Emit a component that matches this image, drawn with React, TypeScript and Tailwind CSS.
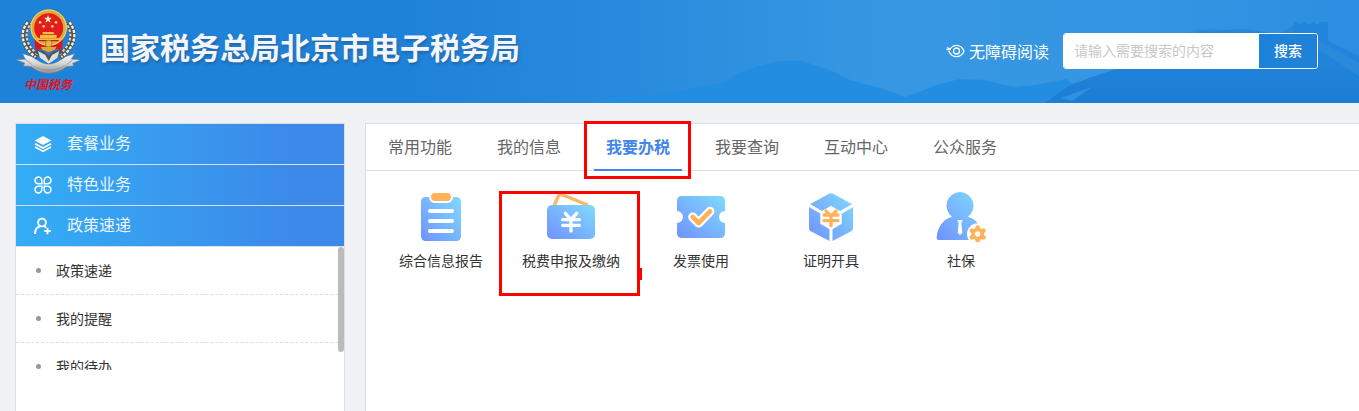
import { useState } from 'react'

const tabs = ['常用功能', '我的信息', '我要办税', '我要查询', '互动中心', '公众服务']
const notices = ['政策速递', '我的提醒', '我的待办']

function Emblem() {
  return (
    <svg width="66" height="66" viewBox="45 28 198 198" aria-hidden="true">
      <defs>
        <linearGradient id="ribbon" x1="0" y1="0" x2="0" y2="1">
          <stop offset="0" stopColor="#ffffff" />
          <stop offset="0.5" stopColor="#d4d4d4" />
          <stop offset="1" stopColor="#8f8f8f" />
        </linearGradient>
      </defs>
      <g fill="none">
        <path d="M88 68C62 98 70 142 112 172" stroke="#55554f" strokeWidth="19" />
        <path d="M203 68C229 98 221 142 179 172" stroke="#55554f" strokeWidth="19" />
        <path d="M83 68C57 98 65 142 107 172" stroke="#f0f0ee" strokeWidth="7" strokeDasharray="9 4" />
        <path d="M208 68C234 98 226 142 184 172" stroke="#f0f0ee" strokeWidth="7" strokeDasharray="9 4" />
        <path d="M93 72C70 100 77 138 115 165" stroke="#dcdcd8" strokeWidth="6" strokeDasharray="8 5" strokeDashoffset="6" />
        <path d="M198 72C221 100 214 138 176 165" stroke="#dcdcd8" strokeWidth="6" strokeDasharray="8 5" strokeDashoffset="6" />
      </g>
      <path d="M103 116h86l-3 36-18-5-22 12-22-12-18 5z" fill="#d8181d" />
      <circle cx="146" cy="84" r="49" fill="#e51c1c" stroke="#dfab35" strokeWidth="11" />
      <circle cx="146" cy="84" r="53" fill="none" stroke="#f6d77b" strokeWidth="3" />
      <path d="M144 45l3 9h9l-7 6 3 9-8-5-8 5 3-9-7-6h9z" fill="#ffedc4" />
      <g fill="#ffd77a">
        <circle cx="120" cy="68" r="4" />
        <circle cx="131" cy="80" r="4" />
        <circle cx="157" cy="80" r="4" />
        <circle cx="168" cy="68" r="4" />
      </g>
      <path d="M128 97h32l4 7h-36zM120 106h50v9h-50zM104 116h82l-8 11h-66z" fill="#f0bd45" />
      <path d="M116 121h60v4h-60z" fill="#c9161d" />
      <circle cx="146" cy="132" r="10" fill="#e5b94c" stroke="#b98217" strokeWidth="3" />
      <path d="M122 142h48l-6 8-18 8-18-8z" fill="#e0a936" />
      <path d="M108 150l22 4 16 14 16-14 22-4 5 10-28 10-15 18-15-18-28-10z" fill="#55534f" />
      <path d="M114 154l22 12 10 18 10-18 22-12-6 20-26 18-26-18z" fill="#dedede" />
      <path
        d="M48 180l28-1-8-17 28 9c20 14 34 22 50 22s32-8 50-22l28-9-10 16 28 3-24 10 3 8-23 2c-18 14-34 20-52 20s-36-7-52-20l-24-2 4-9z"
        fill="url(#ribbon)"
        stroke="#777"
        strokeWidth="1.5"
      />
      <path d="M76 179l20 16M220 179l-20 16M98 198c32 18 64 18 96 0" fill="none" stroke="#888" strokeWidth="2" />
    </svg>
  )
}

function HeaderScene() {
  return (
    <svg className="absolute inset-0 h-full w-full" viewBox="0 0 1359 103" preserveAspectRatio="none" aria-hidden="true">
      <defs>
        <linearGradient id="sky" x1="400" y1="0" x2="1359" y2="0" gradientUnits="userSpaceOnUse">
          <stop offset="0" stopColor="#1f82d9" />
          <stop offset="0.2" stopColor="#2689dc" />
          <stop offset="0.5" stopColor="#3797e2" />
          <stop offset="0.75" stopColor="#3596e3" />
          <stop offset="1" stopColor="#2b8ee0" />
        </linearGradient>
        <linearGradient id="ridge" x1="0" y1="30" x2="0" y2="103" gradientUnits="userSpaceOnUse">
          <stop offset="0" stopColor="#2587dc" />
          <stop offset="1" stopColor="#1b7dd5" />
        </linearGradient>
      </defs>
      <rect width="1359" height="103" fill="url(#sky)" />
      <path d="M590 103l22-6 38-2 30-3 24-6 22-4 10-8 24-8 18-5h24l30 10 18 9 30 8 26 9 30-12 24-6 24 1 30 7 22-2 30-6 30 24z" fill="#238de1" />
      <path d="M1187 34l8-5h22l8 4 20 1 20 12-90 14z" fill="#2b8ddd" />
      <path d="M1045 103l25-18 22-8 45-15 50-26 14-5 42-2 36 5 19-12 29 18 36 18v45z" fill="url(#ridge)" />
      <path d="M1294 42V22h4v2h4v-2h4v2h5v-2h4v2h4v-2h9v20z" fill="#2185db" />
      <path d="M1318 40l41 23v13l-43-28z" fill="#2b89db" />
      <path d="M1060 98l32-11-20 14z" fill="#3190e0" />
    </svg>
  )
}

function EyeIcon() {
  return (
    <svg width="19" height="14" viewBox="0 0 19 14" fill="none" stroke="#fff" strokeWidth="1.300" strokeLinecap="round" aria-hidden="true">
      <path d="M.8 5.200c1.300.7 2.400.5 3.400-.3C5.700 2.700 7.800 1.300 10.500 1.300c3.200 0 6 2.200 7.500 5.700-1.500 3.500-4.300 5.700-7.500 5.700S4.500 10.500 3 7.500" />
      <path d="M1.500 3.800l2.500 1.400" />
      <circle cx="10.500" cy="7" r="3" />
    </svg>
  )
}

function LayersIcon() {
  return (
    <svg width="18" height="18" viewBox="0 0 18 18" aria-hidden="true">
      <path d="M9 1l8.300 4.500L9 10 .7 5.500z" fill="#fff" />
      <path d="M1 8.700l8 4.300 8-4.300M1 12l8 4.300 8-4.300" fill="none" stroke="#fff" strokeWidth="1.600" />
    </svg>
  )
}

function PetalsIcon() {
  return (
    <svg width="18" height="18" viewBox="0 0 18 18" fill="none" stroke="#fff" strokeWidth="1.500" aria-hidden="true">
      <path d="M7.800 7.800H4.500A3.400 3.400 0 1 1 7.800 4.500z" />
      <path d="M10.200 7.800h3.300a3.400 3.400 0 1 0-3.300-3.300z" />
      <path d="M7.800 10.200H4.500a3.400 3.400 0 1 0 3.300 3.300z" />
      <path d="M10.200 10.200h3.300a3.400 3.400 0 1 1-3.300 3.300z" />
    </svg>
  )
}

function UserPlusIcon() {
  return (
    <svg width="18" height="18" viewBox="0 0 18 18" fill="none" stroke="#fff" strokeWidth="1.900" aria-hidden="true">
      <circle cx="8" cy="5.500" r="3.900" />
      <path d="M1 17c0-4 2.200-7.200 5.500-7.800M9.500 9.200c1 .2 1.900.6 2.600 1.300" />
      <path d="M13.500 10.800v6.400M10.300 14h6.400" />
    </svg>
  )
}

function Gradient({ id }: { id: string }) {
  return (
    <linearGradient id={id} x1="1" y1="0" x2="0" y2="1">
      <stop offset="0" stopColor="#80daff" />
      <stop offset="1" stopColor="#7092ff" />
    </linearGradient>
  )
}

function ReportIcon() {
  return (
    <svg width="50" height="50" viewBox="0 0 150 150" aria-hidden="true">
      <Gradient id="report" />
      <rect x="15" y="15" width="120" height="132" rx="14" fill="url(#report)" />
      <rect x="39" y="-4" width="72" height="37" rx="17" fill="#fff" />
      <rect x="45" y="3" width="60" height="24" rx="12" fill="#ffb258" />
      <path d="M42 57h66M42 87h66M42 117h66" stroke="#fff" strokeWidth="12" strokeLinecap="round" />
    </svg>
  )
}

function WalletIcon() {
  return (
    <svg width="50" height="50" viewBox="0 0 150 150" aria-hidden="true">
      <Gradient id="wallet" />
      <path d="M24 42L36 14q5-9 15-5l75 31" fill="none" stroke="#ffb660" strokeWidth="10" />
      <rect x="3" y="39" width="144" height="102" rx="15" fill="url(#wallet)" />
      <path d="M58 64l17 19 17-19M75 83v34M50 83h50M50 100h50" fill="none" stroke="#fff" strokeWidth="10" strokeLinecap="round" />
    </svg>
  )
}

function InvoiceIcon() {
  return (
    <svg width="50" height="50" viewBox="0 0 150 150" aria-hidden="true">
      <Gradient id="invoice" />
      <path
        d="M18 12h114q15 0 15 15v30a18 18 0 0 0 0 36v30q0 15-15 15H18q-15 0-15-15V93a18 18 0 0 0 0-36V27q0-15 15-15z"
        fill="url(#invoice)"
      />
      <path d="M50 75l18 18 34-35" fill="none" stroke="#fff" strokeWidth="27" strokeLinecap="round" strokeLinejoin="round" />
      <path d="M50 75l18 18 34-35" fill="none" stroke="#ffb258" strokeWidth="14" strokeLinejoin="round" strokeLinecap="round" />
    </svg>
  )
}

function CertificateIcon() {
  return (
    <svg width="50" height="50" viewBox="0 0 150 150" aria-hidden="true">
      <Gradient id="certificate" />
      <path
        d="M69 5q6-3 12 0l56 31q4 2 4 7v66q0 5-4 8l-56 29q-6 3-12 0l-56-29q-4-3-4-8V43q0-5 4-7z"
        fill="url(#certificate)"
      />
      <path d="M75 78L6 38M75 78l70-40M75 78v72" stroke="#fff" strokeWidth="9" />
      <path d="M75 41l32 19v35l-32 19-32-19V60z" fill="#fff" />
      <path d="M60 57l9 10M90 57l-9 10M54 69h42M54 86h42M75 69v32" fill="none" stroke="#ffb258" strokeWidth="10" strokeLinecap="round" />
    </svg>
  )
}

function SocialIcon() {
  return (
    <svg width="50" height="50" viewBox="0 0 150 150" aria-hidden="true">
      <Gradient id="social" />
      <path
        d="M72 0a41 41 0 0 1 24 74c24 8 38 26 44 50v10q-2 10-12 10H8q-7 0-6-9c3-30 20-54 46-61A41 41 0 0 1 72 0z"
        fill="url(#social)"
      />
      <path d="M64 84h16l-4 9 3 29-7 7-7-7 3-29z" fill="#fff" />
      <circle cx="125" cy="126" r="32" fill="#fff" />
      <circle cx="125" cy="126" r="19" fill="#ffb258" />
      <path d="M125 107v38M108 116l34 20M108 136l34-20" stroke="#ffb258" strokeWidth="14" strokeLinecap="round" />
      <circle cx="125" cy="126" r="8" fill="#fff" />
    </svg>
  )
}

const menus = [
  { name: '套餐业务', icon: <LayersIcon /> },
  { name: '特色业务', icon: <PetalsIcon /> },
  { name: '政策速递', icon: <UserPlusIcon /> },
]

const services = [
  { name: '综合信息报告', icon: <ReportIcon /> },
  { name: '税费申报及缴纳', icon: <WalletIcon />, marked: true },
  { name: '发票使用', icon: <InvoiceIcon /> },
  { name: '证明开具', icon: <CertificateIcon /> },
  { name: '社保', icon: <SocialIcon /> },
]

export default function App() {
  const [active, setActive] = useState('我要办税')
  const [keyword, setKeyword] = useState('')

  return (
    <div className="flex min-h-screen flex-col bg-[#f0f1f4] font-['Noto_Sans_CJK_SC',sans-serif] text-[#333]">
      <header className="relative flex items-center justify-between bg-[#1f82d9] pr-[41px] pl-[15px] text-white">
        <HeaderScene />
        <div className="relative flex items-center gap-[19px]">
          <div className="flex flex-col items-center pt-[9px] pb-[10px]">
            <Emblem />
            <span className="text-[12px] leading-[18px] font-bold text-[#e3121c] italic">中国税务</span>
          </div>
          <h1 className="pb-3 text-[30px] leading-9 font-bold text-[#f2f5fa] [text-shadow:1px_2px_3px_rgba(40,80,130,0.600)]">
            国家税务总局北京市电子税务局
          </h1>
        </div>
        <div className="relative flex items-center gap-[14px] pb-[2px]">
          <a href="#" className="flex items-center gap-1 text-base">
            <EyeIcon />
            无障碍阅读
          </a>
          <form className="flex h-9 overflow-hidden rounded-[3px] border border-white" onSubmit={(e) => e.preventDefault()}>
            <input
              type="text"
              aria-label="搜索内容"
              placeholder="请输入需要搜索的内容"
              value={keyword}
              onChange={(e) => setKeyword(e.target.value)}
              className="w-[195px] bg-white px-[10px] pb-[2px] text-sm text-[#333] outline-none placeholder:text-[#c8c8c8]"
            />
            <button className="w-[58px] bg-[#1f82d9] pb-[2px] text-sm font-medium">搜索</button>
          </form>
        </div>
      </header>

      <div className="flex flex-1 gap-5 pt-5 pl-[15px]">
        <aside className="w-[330px] shrink-0 border-x border-t border-[#dcdee2] bg-white">
          {menus.map((menu) => (
            <button
              key={menu.name}
              className="flex h-[41px] w-full items-center gap-[15px] border-b border-[#d5e0ec] bg-linear-to-r from-[#33adf5] to-[#3c89e9] to-85% pl-[18px] text-base text-[#eaf5fe]"
            >
              {menu.icon}
              <span className="pb-1">{menu.name}</span>
            </button>
          ))}
          <div className="flex h-[123px] overflow-hidden">
            <ul className="flex-1">
              {notices.map((notice) => (
                <li key={notice} className="h-12 border-b border-dashed border-[#dcdee2]">
                  <a href="#" className="flex h-full items-center gap-[15px] pl-5 text-sm">
                    <span className="h-[5px] w-[5px] rounded-full bg-[#999]" />
                    <span className="pb-[2px]">{notice}</span>
                  </a>
                </li>
              ))}
            </ul>
            <div className="h-[105px] w-[6px] rounded-full bg-[#bbb]" />
          </div>
        </aside>

        <main className="flex-1 border-t border-l border-[#dcdee2] bg-white">
          <nav className="flex h-[47px] gap-[21px] border-b border-[#dcdee2] pl-[10px]">
            {tabs.map((tab) => (
              <button
                key={tab}
                onClick={() => setActive(tab)}
                className={
                  tab === active
                    ? 'relative h-[47px] border-b-2 border-[#4285ec] px-3 pb-[2px] text-base font-bold text-[#4285ec]'
                    : 'relative h-[47px] border-b-2 border-transparent px-3 pb-[2px] text-base text-[#666]'
                }
              >
                {tab}
                {tab === '我要办税' && (
                  <span className="absolute -top-[3px] -right-[9px] -left-[10px] h-[58px] border-3 border-[#f00]" />
                )}
              </button>
            ))}
          </nav>
          <div className="flex flex-wrap pt-[21px] pl-[10px]">
            {services.map((service) => (
              <a key={service.name} href="#" className="relative flex w-[130px] flex-col items-center gap-2 text-sm leading-5">
                {service.icon}
                {service.name}
                {service.marked && (
                  <span className="absolute -top-px -right-[4px] -left-[7px] h-[105px] border-3 border-[#f00]">
                    <span className="absolute top-[74px] -right-[5px] h-3 w-1 bg-[#f00]" />
                  </span>
                )}
              </a>
            ))}
          </div>
        </main>
      </div>
    </div>
  )
}
